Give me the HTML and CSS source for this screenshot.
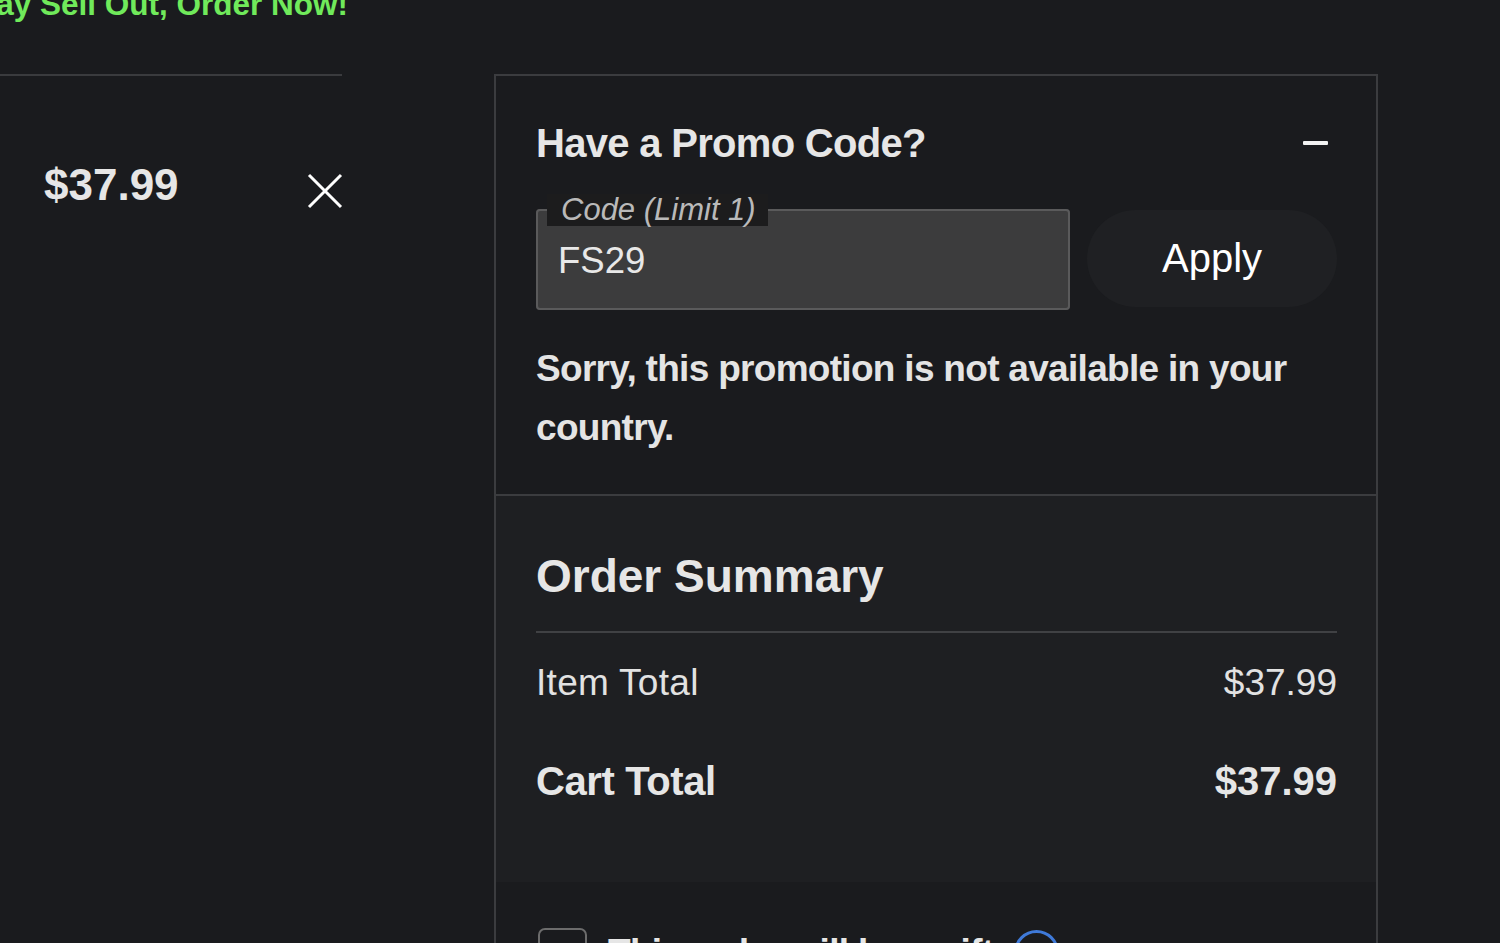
FILE: index.html
```html
<!DOCTYPE html>
<html lang="en">
<head>
<meta charset="utf-8">
<title>Cart</title>
<link rel="stylesheet" href="styles.css">
</head>
<body>
<div class="page">
  <p class="stock-note">Selling Fast, May Sell Out, Order Now!</p>

  <div class="cart-item">
    <span class="item-price">$37.99</span>
    <button class="remove-btn" aria-label="Remove item">
      <svg width="36" height="36" viewBox="0 0 36 36" aria-hidden="true">
        <path d="M2 2 L34 34 M34 2 L2 34" stroke="#ffffff" stroke-width="3" fill="none"/>
      </svg>
    </button>
  </div>

  <aside class="summary-panel">
    <section class="promo">
      <div class="promo-head">
        <h3 class="promo-title">Have a Promo Code?</h3>
        <span class="collapse-icon" aria-hidden="true"></span>
      </div>
      <div class="promo-form">
        <fieldset class="code-field">
          <legend class="code-label">Code (Limit 1)</legend>
          <input class="code-input" type="text" value="FS29">
        </fieldset>
        <button class="apply-btn">Apply</button>
      </div>
      <p class="promo-error">Sorry, this promotion is not available in your country.</p>
    </section>

    <section class="summary">
      <h2 class="summary-title">Order Summary</h2>
      <div class="summary-row">
        <span class="row-label">Item Total</span>
        <span>$37.99</span>
      </div>
      <div class="summary-row total">
        <span class="total-label">Cart Total</span>
        <span>$37.99</span>
      </div>
    </section>

    <section class="gift">
      <label class="gift-option">
        <span class="checkbox"></span>
        <span class="gift-text">This order will be a gift</span>
        <span class="info-icon"></span>
      </label>
    </section>
  </aside>
</div>
</body>
</html>
```

FILE: styles.css
```css
html, body {
  margin: 0;
  padding: 0;
}

body {
  background: #1a1b1e;
  color: #e4e4e4;
  font-family: "Liberation Sans", Arial, sans-serif;
  overflow: hidden;
}

.page {
  display: grid;
  grid-template-columns: 342px 884px;
  grid-template-rows: auto auto;
  column-gap: 152px;
  align-items: start;
}

/* left column */
.stock-note {
  grid-column: 1;
  grid-row: 1;
  display: flex;
  justify-content: flex-end;
  white-space: nowrap;
  margin: -13px -6px 53px 0;
  font-size: 31.5px;
  line-height: 34px;
  font-weight: 700;
  color: #70ea5b;
}

.cart-item {
  grid-column: 1;
  grid-row: 2;
  display: flex;
  justify-content: space-between;
  align-items: flex-start;
  border-top: 2px solid #3a3b3e;
  padding: 84px 0 0 44px;
}

.item-price {
  font-size: 44px;
  line-height: 50px;
  font-weight: 700;
  color: #e6e6e6;
}

.remove-btn {
  margin-top: 13px;
  margin-right: -1px;
  width: 36px;
  height: 36px;
  padding: 0;
  border: 0;
  background: none;
  display: block;
}

.remove-btn svg {
  display: block;
}

/* right panel */
.summary-panel {
  grid-column: 2;
  grid-row: 2;
  border: 2px solid #3b3c3f;
}

.promo {
  padding: 44px 39px 37px 40px;
  border-bottom: 2px solid #3b3c3f;
}

.promo-head {
  display: flex;
  justify-content: space-between;
  align-items: center;
}

.promo-title {
  margin: 0;
  font-size: 40px;
  line-height: 46px;
  font-weight: 700;
  letter-spacing: -0.7px;
  color: #e6e6e6;
}

.collapse-icon {
  width: 25px;
  height: 4px;
  margin-right: 9px;
  background: #f2f2f2;
  border-radius: 1px;
}

.promo-form {
  display: flex;
  align-items: flex-start;
  gap: 17px;
  margin-top: 28px;
}

.code-field {
  flex: none;
  width: 534px;
  box-sizing: border-box;
  min-width: 0;
  margin: 0;
  padding: 15px 20px 27px 20px;
  background: #3c3c3d;
  border: 2px solid #5a5a5b;
  border-radius: 4px;
}

.code-label {
  margin-left: -11px;
  padding: 0 12px 0 14px;
  background: #1c1c1d;
  font-size: 31px;
  line-height: 32px;
  font-style: italic;
  color: #b9b9b9;
}

.code-input {
  display: block;
  width: 100%;
  height: 40px;
  padding: 0;
  margin: 0;
  border: 0;
  outline: none;
  background: transparent;
  font-family: inherit;
  font-size: 36.5px;
  line-height: 40px;
  color: #e8e8e8;
}

.apply-btn {
  flex: 1;
  margin-top: 16px;
  height: 97px;
  border: 0;
  border-radius: 49px;
  background: #1f2023;
  font-family: inherit;
  font-size: 40px;
  color: #ffffff;
}

.promo-error {
  margin: 29px 0 0;
  font-size: 37px;
  line-height: 59px;
  font-weight: 700;
  letter-spacing: -0.7px;
  color: #e4e4e4;
}

.summary {
  background: #1e1f22;
  padding: 54px 39px 78px 40px;
}

.summary-title {
  margin: 0;
  padding-bottom: 28px;
  border-bottom: 2px solid #404144;
  font-size: 46px;
  line-height: 53px;
  font-weight: 700;
  color: #e6e6e6;
}

.summary-row {
  display: flex;
  justify-content: space-between;
  margin-top: 29px;
  font-size: 37px;
  line-height: 42px;
  color: #e2e2e2;
}

.row-label {
  letter-spacing: 0.3px;
}

.summary-row.total {
  margin-top: 54px;
  font-size: 40px;
  line-height: 46px;
  font-weight: 700;
  color: #e6e6e6;
}

.total-label {
  letter-spacing: -0.4px;
}

.gift {
  background: #1a1b1e;
  padding: 46px 39px 60px 40px;
}

.gift-option {
  display: flex;
  align-items: center;
}

.checkbox {
  flex: none;
  width: 49px;
  height: 49px;
  margin-left: 2px;
  box-sizing: border-box;
  border: 2px solid #6c6c6c;
  border-radius: 7px;
}

.gift-text {
  margin-left: 21px;
  font-size: 37px;
  line-height: 42px;
  font-weight: 700;
  letter-spacing: -0.7px;
  color: #e6e6e6;
}

.info-icon {
  flex: none;
  width: 45px;
  height: 45px;
  margin-left: 21px;
  box-sizing: border-box;
  border: 3px solid #3f7ad9;
  border-radius: 50%;
}
```
